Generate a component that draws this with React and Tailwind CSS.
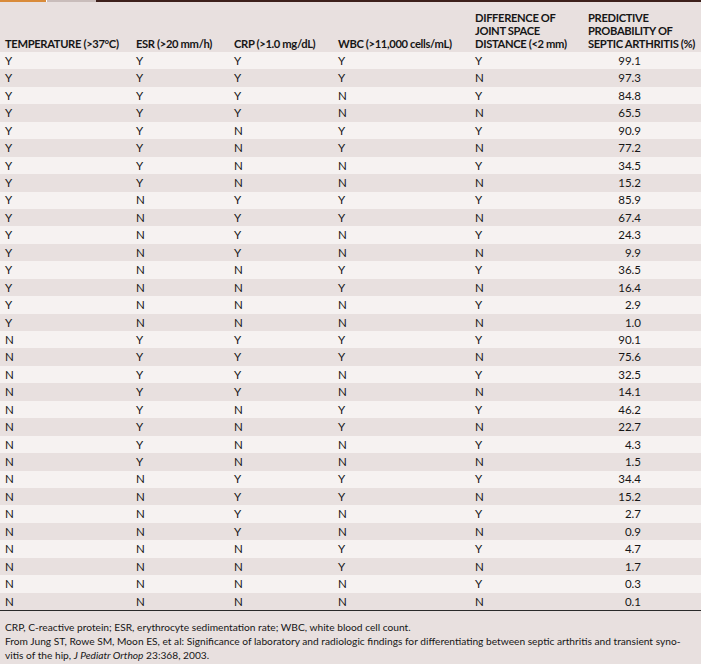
import React from 'react';

// 5-factor model: temperature, ESR, CRP, WBC, joint space difference -> probability
const PROBS = [
  '99.1', '97.3', '84.8', '65.5', '90.9', '77.2', '34.5', '15.2',
  '85.9', '67.4', '24.3', '9.9', '36.5', '16.4', '2.9', '1.0',
  '90.1', '75.6', '32.5', '14.1', '46.2', '22.7', '4.3', '1.5',
  '34.4', '15.2', '2.7', '0.9', '4.7', '1.7', '0.3', '0.1',
];

const ROWS = PROBS.map((p, i) => {
  const bits = [16, 8, 4, 2, 1].map(b => (i & b ? 'N' : 'Y'));
  return [...bits, p];
});

const GRID = 'grid grid-cols-[131px_98px_104px_137px_113px_1fr] pl-[5px]';

const App = () => {
  return (
    <div className="w-[701px] h-[664px] bg-[#e8e0df] text-[#161616] overflow-hidden" style={{ fontFamily: 'Lato, "Open Sans", sans-serif' }}>
      {/* Top rule */}
      <div className="flex h-[2px]">
        <div className="w-[46px] bg-[#d98b3a]" />
        <div className="w-[1px] bg-white" />
        <div className="w-[49px] bg-[#c9bdbb]" />
        <div className="grow bg-[#3d201b]" />
      </div>

      {/* Header */}
      <div className={`${GRID} h-[50px] items-end pb-[2px] text-[11.2px] font-bold leading-[13px] tracking-[-0.35px] whitespace-nowrap`}>
        <span>TEMPERATURE (&gt;37°C)</span>
        <span>ESR (&gt;20 mm/h)</span>
        <span>CRP (&gt;1.0 mg/dL)</span>
        <span>WBC (&gt;11,000 cells/mL)</span>
        <span>DIFFERENCE OF<br />JOINT SPACE<br />DISTANCE (&lt;2 mm)</span>
        <span>PREDICTIVE<br />PROBABILITY OF<br />SEPTIC ARTHRITIS (%)</span>
      </div>

      {/* Body */}
      <div className="flex flex-col">
        {ROWS.map((r, i) => (
          <div key={i} className={`${GRID} h-[17.44px] items-center text-[11.5px] leading-none ${i % 2 === 0 ? 'bg-[#f6f2f1]' : 'bg-[#e8e0df]'}`}>
            {r.slice(0, 5).map((v, j) => <span key={j}>{v}</span>)}
            <span className="w-[53px] text-right">{r[5]}</span>
          </div>
        ))}
      </div>

      {/* Footnotes */}
      <div className="border-t border-[#2a2a2a] pt-[9px] pl-[5px] text-[10.2px] leading-[14px] whitespace-nowrap">
        <div>CRP, C-reactive protein; ESR, erythrocyte sedimentation rate; WBC, white blood cell count.</div>
        <div>From Jung ST, Rowe SM, Moon ES, et al: Significance of laboratory and radiologic findings for differentiating between septic arthritis and transient syno-</div>
        <div>vitis of the hip, <i>J Pediatr Orthop</i> 23:368, 2003.</div>
      </div>
    </div>
  );
};

export default App;
